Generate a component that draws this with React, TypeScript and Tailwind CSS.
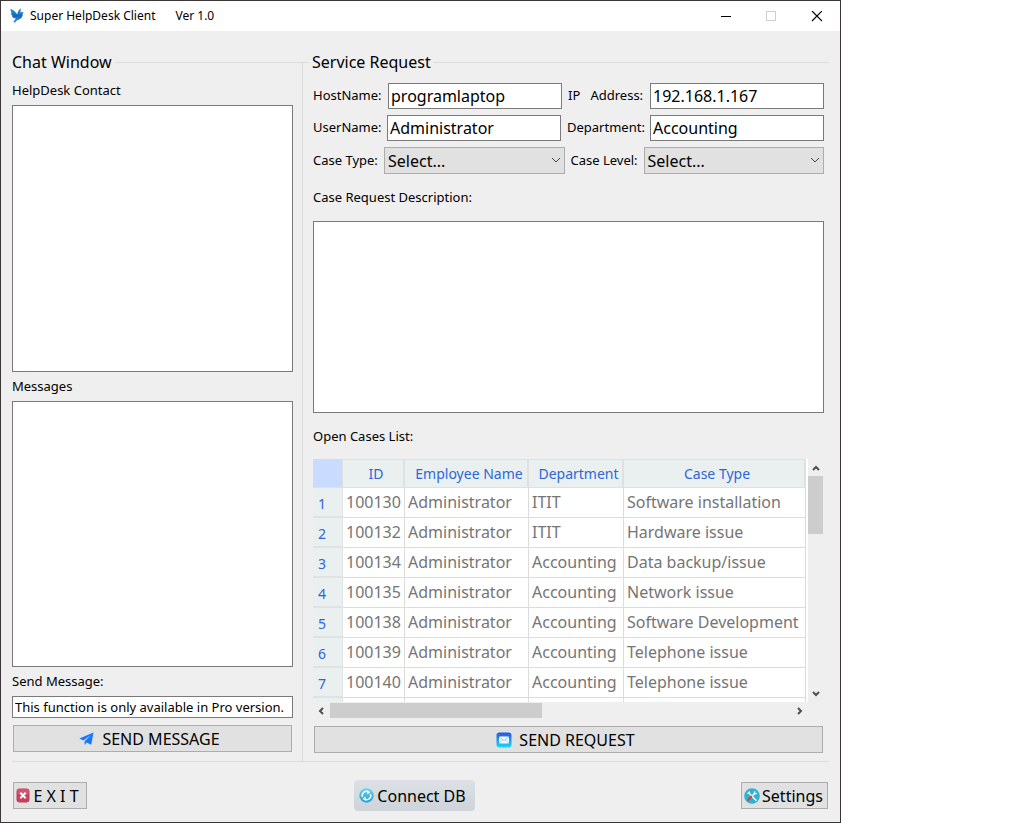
import type { ReactNode } from "react"

const cases = [
  { id: "100130", name: "Administrator", department: "ITIT", type: "Software installation" },
  { id: "100132", name: "Administrator", department: "ITIT", type: "Hardware issue" },
  { id: "100134", name: "Administrator", department: "Accounting", type: "Data backup/issue" },
  { id: "100135", name: "Administrator", department: "Accounting", type: "Network issue" },
  { id: "100138", name: "Administrator", department: "Accounting", type: "Software Development" },
  { id: "100139", name: "Administrator", department: "Accounting", type: "Telephone issue" },
  { id: "100140", name: "Administrator", department: "Accounting", type: "Telephone issue" },
  { id: "", name: "", department: "", type: "" },
]

const inputClass = "h-[26px] w-full min-w-0 border border-[#7a7a7a] bg-white px-[2px] text-base text-black outline-none"
const textareaClass = "block w-full resize-none border border-[#7a7a7a] bg-white p-1 text-[13px] outline-none"
const buttonClass = "flex h-[27px] items-center justify-center border border-[#adadad] bg-[#e1e1e1] text-base text-black"
const headClass = "whitespace-nowrap border-r-2 border-b border-t border-[#e0e0e0] bg-[#eaf0f0] pl-[6px] text-center text-sm font-normal text-[#2e66d9]"
const cellClass = "truncate border-r border-b border-[#dcdcdc] pb-[2px] pl-[3px] text-base text-[#757575]"

function BirdIcon() {
  return (
    <svg viewBox="0 0 16 16" className="h-4 w-4" aria-hidden="true">
      <defs>
        <linearGradient id="bird" x1="0" y1="0" x2="0" y2="1">
          <stop offset="0" stopColor="#2c9fe4" />
          <stop offset="0.5" stopColor="#1267bd" />
          <stop offset="1" stopColor="#4da3dc" />
        </linearGradient>
      </defs>
      <path
        d="M1.5.8C3.5 1.4 6.6 3.6 8.3 6.4 8.4 4 9.6 1.6 12 .2c0 1.8-.3 3.3-.8 4.6.8-.8 1.7-.9 2.4-.5l1.3.5-1.2.6c.2 2.7-.8 4.6-3.1 5.8-1.5.7-2.8 1.2-3.6 2.2l-1.3 2-.3-1.4-1.3.2 1.2-1.7c.6-.9 1.1-1.5 1.6-1.9C4.9 10.4 3.3 9.5 2.8 8.2l1.4.1C2.9 7.5 2 6.5 1.8 5.2l1.1.2C2 4.1 1.4 2.6 1.5.8Z"
        fill="url(#bird)"
      />
    </svg>
  )
}

function PlaneIcon() {
  return (
    <svg viewBox="0 0 15 14" className="h-[14px] w-[15px]" aria-hidden="true">
      <path d="M14.5.6.4 6.4l4 2L12 3 5.6 9.3v3.6l2.1-2.3 4.5 2.2Z" fill="#1677ff" />
    </svg>
  )
}

function MailIcon() {
  return (
    <svg viewBox="0 0 16 16" className="h-4 w-4" aria-hidden="true">
      <defs>
        <linearGradient id="mail" x1="0" y1="0" x2="0" y2="1">
          <stop offset="0" stopColor="#2b55dc" />
          <stop offset="1" stopColor="#16dcf8" />
        </linearGradient>
      </defs>
      <rect x="0.5" y="0.5" width="15" height="15" rx="3" fill="url(#mail)" />
      <rect x="3" y="4.5" width="10" height="7" rx="1" fill="#fff" />
      <path d="m3.4 5.1 4.6 3.6 4.6-3.6M3.4 11l3.2-3M12.6 11 9.4 8" fill="none" stroke="#68a8ed" strokeWidth="0.7" />
    </svg>
  )
}

function ExitIcon() {
  return (
    <svg viewBox="0 0 14 15" className="h-[15px] w-[14px]" aria-hidden="true">
      <rect x="0.5" y="0.5" width="13" height="14" rx="3.2" fill="#c3415f" />
      <rect x="1" y="1" width="12" height="6" rx="3" fill="#cf5670" />
      <path d="m4.3 4.8 5.4 5.4M9.7 4.8l-5.4 5.4" stroke="#fff" strokeWidth="2" />
    </svg>
  )
}

function SyncIcon() {
  return (
    <svg viewBox="0 0 15 15" className="h-[15px] w-[15px]" aria-hidden="true">
      <defs>
        <linearGradient id="sync" x1="0" y1="0" x2="0" y2="1">
          <stop offset="0" stopColor="#67d3f1" />
          <stop offset="1" stopColor="#219fd4" />
        </linearGradient>
      </defs>
      <circle cx="7.5" cy="7.5" r="7.2" fill="url(#sync)" />
      <path d="M3.6 9A4 4 0 0 1 9 3.8M11.4 6A4 4 0 0 1 6 11.2" fill="none" stroke="#fff" strokeWidth="1.5" />
      <path d="M8 1.9 11.3 4 8.5 6.4ZM7 13.1 3.7 11l2.8-2.4Z" fill="#fff" />
    </svg>
  )
}

function ToolsIcon() {
  return (
    <svg viewBox="0 0 16 16" className="h-4 w-4" aria-hidden="true">
      <circle cx="8" cy="8" r="7.8" fill="#31b3cf" />
      <path d="M5 5 12 12.2" stroke="#fff" strokeWidth="1.4" strokeLinecap="round" />
      <path d="M3.4 5.2 5.4 5.4 5.2 3.4" fill="none" stroke="#fff" strokeWidth="1.2" />
      <path d="M8 8.2 10.5 5.6" stroke="#fff" strokeWidth="1.4" />
      <path d="M10.6 3.2 10.3 5.7l2.6-.3" fill="none" stroke="#fff" strokeWidth="1.2" />
      <path d="m4.4 11.8 2.8-3" stroke="#c54a50" strokeWidth="2.3" strokeLinecap="round" />
    </svg>
  )
}

function Chevron({ d, className }: { d: string; className: string }) {
  return (
    <svg viewBox="0 0 10 10" className={className} fill="none" stroke="currentColor" aria-hidden="true">
      <path d={d} />
    </svg>
  )
}

function SelectBox({ id }: { id: string }) {
  return (
    <div className="relative">
      <select id={id} className="block h-[27px] w-full appearance-none border border-[#adadad] bg-[#e1e1e1] px-[3px] text-base text-black outline-none">
        <option>Select...</option>
      </select>
      <Chevron d="M1 3l4 4 4-4" className="pointer-events-none absolute top-2 right-1 h-[10px] w-[10px] text-[#444]" />
    </div>
  )
}

function Heading({ children }: { children: ReactNode }) {
  return (
    <div className="flex h-6 items-center gap-[3px]">
      <h2 className="text-base leading-6">{children}</h2>
      <div className="h-px flex-1 bg-[#dcdcdc]" />
    </div>
  )
}

function CasesTable() {
  return (
    <div className="grid grid-cols-[1fr_16px]">
      <div className="h-[243px] overflow-hidden bg-white pr-[2px]">
        <table className="w-full table-fixed border-separate border-spacing-0">
          <colgroup>
            <col className="w-[30px]" />
            <col className="w-[62px]" />
            <col className="w-[124px]" />
            <col className="w-[95px]" />
            <col />
          </colgroup>
          <thead>
            <tr className="h-[29px]">
              <th className="border-r border-b border-[#e0e0e0] bg-[#c9dcff]" aria-label="Row" />
              <th className={headClass}>ID</th>
              <th className={headClass}>Employee Name</th>
              <th className={headClass}>Department</th>
              <th className={headClass}>Case Type</th>
            </tr>
          </thead>
          <tbody>
            {cases.map((item, i) => (
              <tr key={i} className="h-[30px]">
                <th className="border-r border-b-2 border-[#dfe3e3] bg-[#eaf0f0] pt-[3px] pl-[5px] text-left text-sm font-normal text-[#2e66d9]">
                  {item.id && i + 1}
                </th>
                <td className={cellClass}>{item.id}</td>
                <td className={cellClass}>{item.name}</td>
                <td className={cellClass}>{item.department}</td>
                <td className={cellClass}>{item.type}</td>
              </tr>
            ))}
          </tbody>
        </table>
      </div>
      <div className="flex flex-col items-center pr-px text-[#505050]">
        <div className="flex h-[17px] items-center">
          <Chevron d="M2 7l3-3 3 3" className="h-[10px] w-[10px] stroke-2" />
        </div>
        <div className="h-[58px] w-full bg-[#cdcdcd]" />
        <div className="mt-auto flex h-[17px] items-center">
          <Chevron d="M2 3l3 3 3-3" className="h-[10px] w-[10px] stroke-2" />
        </div>
      </div>
      <div className="mt-px flex h-[15px] items-center text-[#505050]">
        <div className="flex w-[17px] justify-center">
          <Chevron d="M6 2L3 5l3 3" className="h-[10px] w-[10px] stroke-2" />
        </div>
        <div className="h-full w-[212px] bg-[#cdcdcd]" />
        <div className="ml-auto flex w-[17px] justify-center">
          <Chevron d="M3 2l3 3-3 3" className="h-[10px] w-[10px] stroke-2" />
        </div>
      </div>
    </div>
  )
}

export default function App() {
  return (
    <div className="min-h-screen bg-white font-['Noto_Sans','Noto_Sans_CJK_SC',sans-serif] text-black">
      <div className="flex min-h-screen w-full max-w-[841px] flex-col border border-[#3a3636] bg-[#efefef]">
        <header className="flex h-[30px] items-center bg-white pl-2 text-xs">
          <BirdIcon />
          <h1 className="ml-[5px]">Super HelpDesk Client</h1>
          <span className="ml-5">Ver 1.0</span>
          <div className="ml-auto flex">
            <button aria-label="Minimize" className="flex h-[30px] w-[45px] items-center justify-center">
              <svg viewBox="0 0 11 11" className="h-[11px] w-[11px]"><path d="M1 5.5h10" stroke="#000" /></svg>
            </button>
            <button aria-label="Maximize" disabled className="flex h-[30px] w-[45px] items-center justify-center">
              <svg viewBox="0 0 11 11" className="h-[11px] w-[11px]"><path d="M1.5.5h9v9h-9z" fill="none" stroke="#ccc" /></svg>
            </button>
            <button aria-label="Close" className="flex h-[30px] w-[47px] items-center justify-center">
              <svg viewBox="0 0 11 11" className="h-[11px] w-[11px]"><path d="M1 0l10 10M11 0L1 10" stroke="#000" strokeWidth="1.2" /></svg>
            </button>
          </div>
        </header>

        <main className="mx-[11px] mt-[19px] flex flex-1 border-b border-[#dcdcdc] text-[13px]">
          <section className="flex w-[290px] flex-col">
            <Heading>Chat Window</Heading>
            <div className="flex flex-1 flex-col pr-[9px]">
              <label htmlFor="contact" className="mt-[6px] leading-5">HelpDesk Contact</label>
              <textarea id="contact" className={textareaClass + " mt-[5px] flex-1"} />
              <label htmlFor="messages" className="mt-1 leading-5">Messages</label>
              <textarea id="messages" className={textareaClass + " mt-[5px] flex-1"} />
              <label htmlFor="message" className="mt-1 leading-5">Send Message:</label>
              <input
                id="message"
                defaultValue="This function is only available in Pro version."
                className="mt-[5px] h-[22px] w-full border border-[#7a7a7a] bg-white px-[2px] text-[13px] outline-none"
              />
              <button className={buttonClass + " mx-px mt-[7px] mb-[9px] gap-2 pr-[6px]"}>
                <PlaneIcon />
                SEND MESSAGE
              </button>
            </div>
          </section>

          <div className="mt-3 w-px bg-[#dcdcdc]" />

          <section className="flex min-w-0 flex-1 flex-col">
            <div className="flex items-center gap-[3px]">
              <div className="h-px w-[6px] bg-[#dcdcdc]" />
              <div className="flex-1">
                <Heading>Service Request</Heading>
              </div>
            </div>
            <div className="flex flex-1 flex-col pr-[5px] pl-[10px]">
              <div className="mt-[9px] grid grid-cols-[75px_1fr_88px_1fr] items-center">
                <label htmlFor="host">HostName:</label>
                <input id="host" defaultValue="programlaptop" className={inputClass} />
                <label htmlFor="ip" className="pl-[6px] whitespace-pre">IP   Address:</label>
                <input id="ip" defaultValue="192.168.1.167" className={inputClass} />
              </div>
              <div className="mt-[6px] grid grid-cols-[74px_1fr_89px_1fr] items-center">
                <label htmlFor="user">UserName:</label>
                <input id="user" defaultValue="Administrator" className={inputClass} />
                <label htmlFor="department" className="pl-[6px]">Department:</label>
                <input id="department" defaultValue="Accounting" className={inputClass} />
              </div>
              <div className="mt-[6px] grid grid-cols-[71px_1fr_79px_1fr] items-center">
                <label htmlFor="type">Case Type:</label>
                <SelectBox id="type" />
                <label htmlFor="level" className="pl-[6px]">Case Level:</label>
                <SelectBox id="level" />
              </div>
              <label htmlFor="description" className="mt-[13px] leading-5">Case Request Description:</label>
              <textarea id="description" className={textareaClass + " mt-[14px] flex-1"} />
              <h3 className="mt-[13px] mb-[13px] leading-5">Open Cases List:</h3>
              <CasesTable />
              <button className={buttonClass + " mx-px mt-2 mb-2 gap-[7px] pr-[6px]"}>
                <MailIcon />
                SEND REQUEST
              </button>
            </div>
          </section>
        </main>

        <footer className="mr-3 mb-[11px] ml-3 flex h-[49px] items-end justify-between">
          <button className={buttonClass + " mb-[2px] w-[74px] gap-[3px] pr-[5px]"}>
            <ExitIcon />
            <span className="whitespace-nowrap">E X I T</span>
          </button>
          <button className="flex h-[31px] w-[121px] items-center justify-center gap-[3px] rounded bg-linear-to-b from-[#dde1e5] to-[#cdd3d9] pr-[3px] text-base">
            <SyncIcon />
            Connect DB
          </button>
          <button className={buttonClass + " mb-[2px] w-[87px] gap-[2px] pr-[2px]"}>
            <ToolsIcon />
            Settings
          </button>
        </footer>
      </div>
    </div>
  )
}
